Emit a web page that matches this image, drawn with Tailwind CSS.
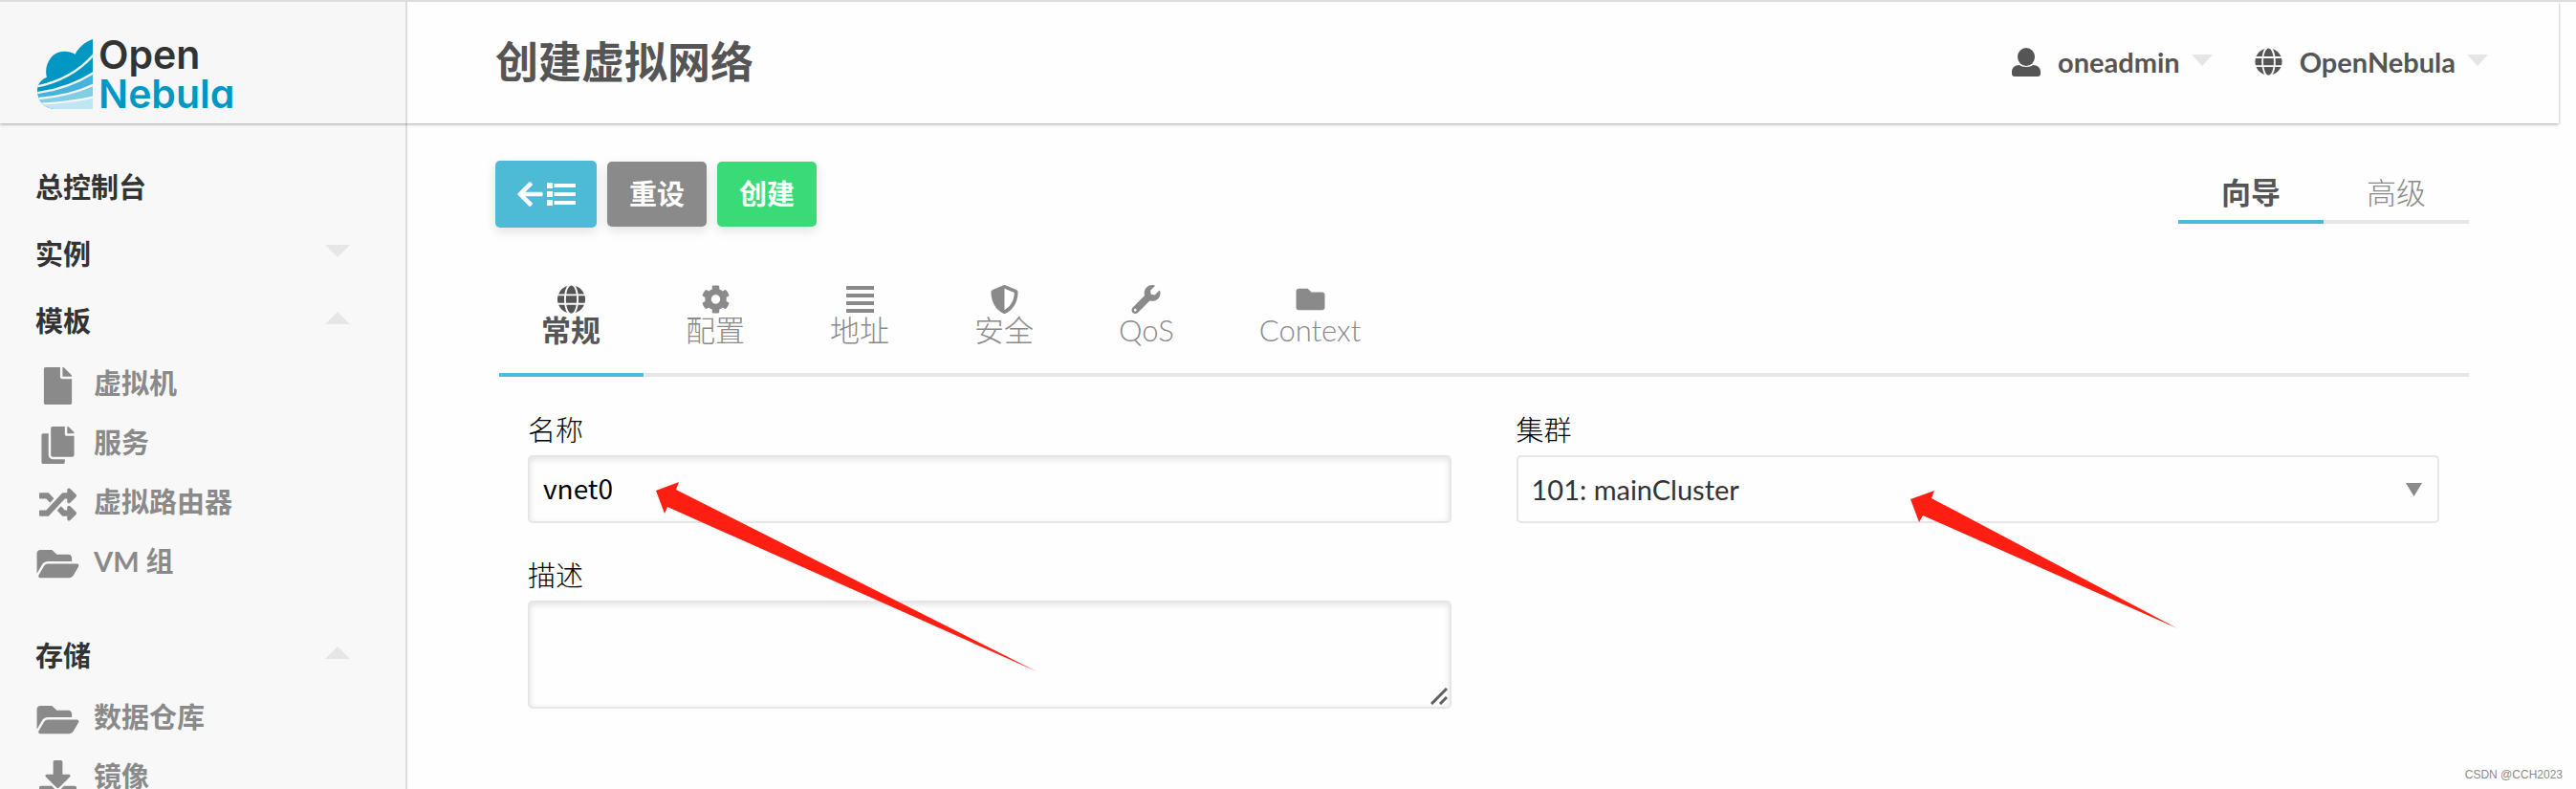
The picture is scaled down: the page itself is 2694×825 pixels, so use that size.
<!DOCTYPE html>
<html lang="zh-CN">

<head>
    <meta charset="UTF-8">
    <meta name="viewport" content="width=device-width, initial-scale=1.0">
    <title>OpenNebula - 创建虚拟网络</title>
    <script src="https://cdn.jsdelivr.net/npm/@tailwindcss/browser@4"></script>
</head>

<body class="relative flex h-screen flex-col overflow-hidden border-t-2 border-[#ddd] bg-[#fefefe] font-['Lato','Noto_Sans_CJK_SC',sans-serif] text-[29px] text-[#333]">
    <!-- Header -->
    <header class="relative z-10 mr-[18px] flex h-[127px] shrink-0 bg-[#fefefe] shadow-[0_1px_3px_rgba(0,0,0,0.35)]">
        <a href="#" class="flex w-[426px] shrink-0 items-center gap-[6px] border-r-2 border-[#ddd] bg-[#f7f7f7] pt-6 pl-[39px]">
            <svg class="h-[73px] w-[58px]" viewBox="0 0 174 219">
                <defs>
                    <clipPath id="cloud">
                        <path d="M174 0V219H58C24 219 0 194 0 160C0 142 12 126 30 119C20 82 44 38 83 38C97 38 109 41 119 47C128 28 148 8 174 0Z"/>
                    </clipPath>
                </defs>
                <g clip-path="url(#cloud)">
                    <path fill="#0098c3" d="M0 0H174V219H0Z"/>
                    <path fill="#45b3db" d="M-4 169C60 160 120 142 178 105V219H-4Z"/>
                    <path fill="#83cee6" d="M-4 187C60 182 120 170 178 143V219H-4Z"/>
                    <path fill="#c0e6f3" d="M-4 203C60 200 120 196 178 182V219H-4Z"/>
                    <g fill="none" stroke="#f7f7f7" stroke-width="7">
                        <path d="M-4 149C70 134 128 105 178 47"/>
                        <path d="M-4 169C60 160 120 142 178 104"/>
                        <path d="M-4 187C60 182 120 170 178 142"/>
                        <path d="M-4 204C60 201 120 196 178 181"/>
                    </g>
                </g>
            </svg>
            <span class="flex flex-col font-['Inter'] text-[41px] leading-[41px] font-semibold [font-feature-settings:'cv11']">
                <span>Open</span>
                <span class="text-[#0098c3]">Nebula</span>
            </span>
        </a>
        <div class="flex flex-1 items-center justify-between pr-[74px] pl-[92px]">
            <h1 class="text-[45px] leading-none font-bold text-[#555]">创建虚拟网络</h1>
            <div class="flex gap-11 pb-[2px] font-bold text-[#555]">
                <button type="button" class="flex items-center">
                    <svg class="mr-[18px] h-[30px] w-[30px]" viewBox="0 0 30 30" fill="currentColor"><ellipse cx="15" cy="9.500" rx="9" ry="9.500"/><path d="M8 18C10 20.500 20 20.500 22 18C27 18 30 21 30 25V27C30 29 29 30 27 30H3C1 30 0 29 0 27V25C0 21 3 18 8 18Z"/></svg>
                    oneadmin
                    <svg class="mb-1 ml-3 h-[12px] w-[22px]" viewBox="0 0 22 12" fill="#e6e6e6"><path d="M0 0H22L11 12Z"/></svg>
                </button>
                <button type="button" class="flex items-center">
                    <svg class="mr-[18px] h-[29px] w-[29px]" viewBox="0 0 496 512" fill="currentColor"><path d="M336.500 160C322 70.700 287.800 8 248 8s-74 62.700-88.500 152h177zM152 256c0 22.200 1.200 43.500 3.300 64h185.300c2.100-20.500 3.300-41.800 3.300-64s-1.200-43.500-3.300-64H155.300c-2.100 20.500-3.300 41.800-3.300 64zm324.700-96c-28.600-67.900-86.500-120.400-158-141.600 24.400 33.800 41.200 84.700 50 141.600h108zM177.200 18.400C105.800 39.600 47.800 92.100 19.300 160h108c8.700-56.900 25.500-107.800 49.900-141.600zM487.400 192H372.700c2.100 21 3.300 42.500 3.300 64s-1.200 43-3.300 64h114.600c5.500-20.500 8.600-41.800 8.600-64s-3.100-43.500-8.500-64zM120 256c0-21.500 1.200-43 3.300-64H8.600C3.200 212.500 0 233.800 0 256s3.200 43.500 8.600 64h114.600c-2-21-3.200-42.500-3.200-64zm39.500 96c14.500 89.300 48.700 152 88.500 152s74-62.700 88.500-152h-177zm159.300 141.600c71.400-21.200 129.400-73.700 158-141.600h-108c-8.800 56.900-25.600 107.800-50 141.600zM19.300 352c28.600 67.900 86.500 120.400 158 141.600-24.400-33.800-41.200-84.700-50-141.600h-108z"/></svg>
                    OpenNebula
                    <svg class="mb-1 ml-3 h-[12px] w-[22px]" viewBox="0 0 22 12" fill="#e6e6e6"><path d="M0 0H22L11 12Z"/></svg>
                </button>
            </div>
        </div>
    </header>

    <div class="flex min-h-0 flex-1">
        <!-- Sidebar -->
        <nav class="w-[426px] shrink-0 overflow-hidden border-r-2 border-[#ddd] bg-[#f8f8f8] pt-[34px] pr-[58px] pl-[37px] font-bold">
            <a href="#" class="mb-1 flex h-[66px] items-center">总控制台</a>
            <a href="#" class="mb-1 flex h-[66px] items-center justify-between">
                实例
                <svg class="mb-2 h-[13px] w-[26px]" viewBox="0 0 26 13" fill="#e6e6e6"><path d="M0 0H26L13 13Z"/></svg>
            </a>
            <a href="#" class="flex h-[66px] items-center justify-between">
                模板
                <svg class="mb-2 h-[13px] w-[26px]" viewBox="0 0 26 13" fill="#e6e6e6"><path d="M0 13H26L13 0Z"/></svg>
            </a>
            <ul class="mt-px mb-[35px] text-[#8a8a8a]">
                <li>
                    <a href="#" class="flex h-[62px] items-center gap-[14px]">
                        <svg class="mt-1 h-[39px] w-[47px]" viewBox="0 0 384 512" fill="currentColor"><path d="M224 136V0H24C10.700 0 0 10.700 0 24v464c0 13.300 10.700 24 24 24h336c13.300 0 24-10.700 24-24V160H248c-13.200 0-24-10.800-24-24zm160-14.100v6.100H256V0h6.100c6.400 0 12.500 2.500 17 7l97.900 98c4.500 4.500 7 10.600 7 16.900z"/></svg>
                        虚拟机
                    </a>
                </li>
                <li>
                    <a href="#" class="flex h-[62px] items-center gap-[14px]">
                        <svg class="mt-1 h-[39px] w-[47px]" viewBox="0 0 448 512" fill="currentColor"><path d="M320 448v40c0 13.255-10.745 24-24 24H24c-13.255 0-24-10.745-24-24V120c0-13.255 10.745-24 24-24h72v296c0 30.879 25.121 56 56 56h168zm0-344V0H152c-13.255 0-24 10.745-24 24v368c0 13.255 10.745 24 24 24h272c13.255 0 24-10.745 24-24V128H344c-13.200 0-24-10.800-24-24zm120.971-31.029L375.029 7.029A24 24 0 0 0 358.059 0H352v96h96v-6.059a24 24 0 0 0-7.029-16.970z"/></svg>
                        服务
                    </a>
                </li>
                <li>
                    <a href="#" class="flex h-[62px] items-center gap-[14px]">
                        <svg class="mt-1 h-[39px] w-[47px]" viewBox="0 0 512 512" fill="currentColor"><path d="M504.971 359.029c9.373 9.373 9.373 24.569 0 33.941l-80 79.984c-15.010 15.010-40.971 4.490-40.971-16.971V416h-58.785a12.004 12.004 0 0 1-8.773-3.812l-70.556-75.596 53.333-57.143L352 336h32v-39.981c0-21.438 25.943-31.998 40.971-16.971l80 79.981zM12 176h84l52.781 56.551 53.333-57.143-70.556-75.596A11.999 11.999 0 0 0 122.785 96H12c-6.627 0-12 5.373-12 12v56c0 6.627 5.373 12 12 12zm372 0v39.984c0 21.460 25.961 31.980 40.971 16.971l80-79.984c9.373-9.373 9.373-24.569 0-33.941l-80-79.981C409.943 24.021 384 34.582 384 56.019V96h-58.785a12.004 12.004 0 0 0-8.773 3.812L96 336H12c-6.627 0-12 5.373-12 12v56c0 6.627 5.373 12 12 12h110.785c3.326 0 6.503-1.381 8.773-3.812L352 176h32z"/></svg>
                        虚拟路由器
                    </a>
                </li>
                <li>
                    <a href="#" class="flex h-[62px] items-center gap-[14px]">
                        <svg class="mt-1 h-[39px] w-[47px]" viewBox="0 0 576 512" fill="currentColor"><path d="M572.694 292.093L500.270 416.248A63.997 63.997 0 0 1 444.989 448H45.025c-18.523 0-30.064-20.093-20.731-36.093l72.424-124.155A64 64 0 0 1 152 256h399.964c18.523 0 30.064 20.093 20.730 36.093zM152 224h328v-48c0-26.510-21.490-48-48-48H272l-64-64H48C21.490 64 0 85.490 0 112v278.046l69.077-118.418C86.214 242.250 117.989 224 152 224z"/></svg>
                        VM 组
                    </a>
                </li>
            </ul>
            <a href="#" class="flex h-[66px] items-center justify-between">
                存储
                <svg class="mb-2 h-[13px] w-[26px]" viewBox="0 0 26 13" fill="#e6e6e6"><path d="M0 13H26L13 0Z"/></svg>
            </a>
            <ul class="text-[#8a8a8a]">
                <li>
                    <a href="#" class="flex h-[62px] items-center gap-[14px]">
                        <svg class="mt-1 h-[39px] w-[47px]" viewBox="0 0 576 512" fill="currentColor"><path d="M572.694 292.093L500.270 416.248A63.997 63.997 0 0 1 444.989 448H45.025c-18.523 0-30.064-20.093-20.731-36.093l72.424-124.155A64 64 0 0 1 152 256h399.964c18.523 0 30.064 20.093 20.730 36.093zM152 224h328v-48c0-26.510-21.490-48-48-48H272l-64-64H48C21.490 64 0 85.490 0 112v278.046l69.077-118.418C86.214 242.250 117.989 224 152 224z"/></svg>
                        数据仓库
                    </a>
                </li>
                <li>
                    <a href="#" class="flex h-[62px] items-center gap-[14px]">
                        <svg class="mt-1 h-[39px] w-[47px]" viewBox="0 0 512 512" fill="currentColor"><path d="M216 0h80c13.300 0 24 10.700 24 24v168h87.700c17.800 0 26.700 21.500 14.100 34.100L269.700 378.300c-7.500 7.500-19.800 7.500-27.300 0L90.100 226.100c-12.600-12.600-3.700-34.100 14.100-34.100H192V24c0-13.300 10.700-24 24-24zm296 376v112c0 13.300-10.700 24-24 24H24c-13.300 0-24-10.700-24-24V376c0-13.300 10.700-24 24-24h146.700l49 49c20.100 20.100 52.500 20.100 72.600 0l49-49H488c13.300 0 24 10.700 24 24z"/></svg>
                        镜像
                    </a>
                </li>
            </ul>
        </nav>

        <!-- Content -->
        <main class="min-w-0 flex-1 pt-[39px] pr-[112px] pl-[92px]">
            <div class="flex items-start justify-between">
                <div class="flex items-center gap-[11px] font-bold text-white">
                    <button type="button" aria-label="返回列表" class="flex h-[70px] w-[106px] items-center justify-center gap-1 rounded-[5px] bg-[#4dbbd5] shadow-[0_4px_12px_rgba(0,0,0,0.12)]">
                        <svg class="h-[30px] w-[27px]" viewBox="0 0 448 512" fill="currentColor"><path d="M257.500 445.100l-22.200 22.200c-9.400 9.400-24.600 9.400-33.900 0L7 273c-9.400-9.400-9.400-24.600 0-33.900L201.400 44.700c9.400-9.400 24.600-9.400 33.900 0l22.200 22.200c9.500 9.500 9.300 25-.4 34.300L136.600 216H424c13.300 0 24 10.700 24 24v32c0 13.300-10.700 24-24 24H136.600l120.500 114.800c9.800 9.300 10 24.800.4 34.300z"/></svg>
                        <svg class="h-[24px] w-[30px]" viewBox="0 0 30 24" fill="currentColor"><path d="M0 0h6v6H0zM0 9h6v6H0zM0 18h6v6H0zM7.500 1H30v4H7.500zM7.500 10H30v4H7.500zM7.500 19H30v4H7.500z"/></svg>
                    </button>
                    <button type="button" class="h-[68px] w-[104px] rounded-[5px] bg-[#8a8a8a] shadow-[0_4px_12px_rgba(0,0,0,0.12)]">重设</button>
                    <button type="button" class="h-[68px] w-[104px] rounded-[5px] bg-[#3adb76] shadow-[0_4px_12px_rgba(0,0,0,0.12)]">创建</button>
                </div>
                <div class="flex text-[31px]">
                    <button type="button" class="h-[66px] border-b-4 border-[#4dbbd5] px-[45px] pt-1 font-bold text-[#555]">向导</button>
                    <button type="button" class="h-[66px] border-b-4 border-[#e6e6e6] px-[45px] pt-1 font-light text-[#8a8a8a]">高级</button>
                </div>
            </div>

            <div class="mt-[60px] ml-1 flex text-[31px] leading-[34px] font-light text-[#8a8a8a]">
                <button type="button" class="flex flex-col items-center border-b-4 border-[#4dbbd5] pr-[45px] pb-[28px] pl-[44px] font-bold text-[#555]">
                    <svg class="h-[30px] w-[31px]" viewBox="0 0 496 512" fill="currentColor"><path d="M336.500 160C322 70.700 287.800 8 248 8s-74 62.700-88.500 152h177zM152 256c0 22.200 1.200 43.500 3.300 64h185.300c2.100-20.500 3.300-41.800 3.300-64s-1.200-43.500-3.300-64H155.300c-2.100 20.500-3.300 41.800-3.300 64zm324.700-96c-28.600-67.900-86.500-120.400-158-141.600 24.400 33.800 41.200 84.700 50 141.600h108zM177.200 18.400C105.800 39.600 47.800 92.100 19.300 160h108c8.700-56.900 25.500-107.800 49.900-141.600zM487.400 192H372.700c2.100 21 3.300 42.500 3.300 64s-1.200 43-3.300 64h114.600c5.500-20.500 8.600-41.800 8.600-64s-3.100-43.500-8.500-64zM120 256c0-21.500 1.200-43 3.300-64H8.600C3.200 212.500 0 233.800 0 256s3.200 43.500 8.600 64h114.600c-2-21-3.200-42.500-3.200-64zm39.500 96c14.500 89.300 48.700 152 88.500 152s74-62.700 88.500-152h-177zm159.300 141.600c71.400-21.200 129.400-73.700 158-141.600h-108c-8.800 56.900-25.600 107.800-50 141.600zM19.300 352c28.600 67.900 86.500 120.400 158 141.600-24.400-33.800-41.200-84.700-50-141.600h-108z"/></svg>
                    常规
                </button>
                <button type="button" class="flex flex-col items-center border-b-4 border-[#e6e6e6] pr-[45px] pb-[28px] pl-[44px]">
                    <svg class="h-[30px] w-[31px]" viewBox="0 0 512 512" fill="currentColor"><path d="M487.400 315.700l-42.600-24.600c4.300-23.200 4.300-47 0-70.200l42.600-24.600c4.900-2.800 7.100-8.600 5.500-14-11.100-35.600-30-67.800-54.700-94.600-3.800-4.100-10-5.100-14.800-2.300L380.800 110c-17.900-15.400-38.500-27.300-60.800-35.100V25.800c0-5.600-3.900-10.500-9.400-11.700-36.700-8.200-74.300-7.800-109.200 0-5.500 1.200-9.400 6.100-9.400 11.700V75c-22.200 7.900-42.800 19.800-60.800 35.100L88.700 85.500c-4.900-2.800-11-1.900-14.800 2.300-24.700 26.700-43.600 58.900-54.700 94.600-1.700 5.400.6 11.200 5.500 14L67.300 221c-4.300 23.200-4.300 47 0 70.200l-42.600 24.600c-4.900 2.800-7.100 8.600-5.500 14 11.100 35.600 30 67.800 54.700 94.600 3.800 4.100 10 5.100 14.800 2.300l42.600-24.600c17.900 15.400 38.500 27.300 60.800 35.100v49.200c0 5.600 3.900 10.500 9.400 11.700 36.700 8.200 74.300 7.800 109.200 0 5.500-1.200 9.400-6.100 9.400-11.700v-49.200c22.200-7.900 42.800-19.800 60.800-35.100l42.600 24.600c4.900 2.800 11 1.900 14.800-2.300 24.700-26.700 43.600-58.900 54.700-94.600 1.500-5.500-.7-11.300-5.600-14.100zM256 336c-44.100 0-80-35.900-80-80s35.900-80 80-80 80 35.900 80 80-35.900 80-80 80z"/></svg>
                    配置
                </button>
                <button type="button" class="flex flex-col items-center border-b-4 border-[#e6e6e6] pr-[45px] pb-[28px] pl-[44px]">
                    <svg class="h-[30px] w-[31px]" viewBox="0 0 31 30" fill="currentColor"><path d="M1 1H30V5H1zM1 9H30V13H1zM1 17H30V21H1zM1 25H30V29H1z"/></svg>
                    地址
                </button>
                <button type="button" class="flex flex-col items-center border-b-4 border-[#e6e6e6] pr-[45px] pb-[28px] pl-[44px]">
                    <svg class="h-[30px] w-[31px]" viewBox="16 0 480 512" fill="currentColor"><path fill-rule="evenodd" d="M466.500 83.700l-192-80a48.150 48.150 0 0 0-36.900 0l-192 80C27.700 91.100 16 108.600 16 128c0 198.500 114.500 335.700 221.500 380.300 11.800 4.900 25.100 4.900 36.900 0C360.100 472.600 496 349.300 496 128c0-19.400-11.700-36.900-29.500-44.300zM256.100 446.300l-.1-381 175.900 73.300c-3.300 151.400-82.100 261.100-175.800 307.700z"/></svg>
                    安全
                </button>
                <button type="button" class="flex flex-col items-center border-b-4 border-[#e6e6e6] pr-[45px] pb-[28px] pl-[44px]">
                    <svg class="h-[30px] w-[31px]" viewBox="0 0 512 512" fill="currentColor"><path d="M507.730 109.100c-2.240-9.030-13.540-12.090-20.120-5.510l-74.360 74.360-67.880-11.310-11.310-67.880 74.360-74.360c6.620-6.620 3.430-17.900-5.660-20.160-47.380-11.740-99.550.91-136.580 37.930-39.640 39.640-50.550 97.100-34.050 147.200L18.740 402.760c-24.990 24.990-24.990 65.510 0 90.500 24.990 24.990 65.510 24.990 90.500 0l213.210-213.210c50.120 16.710 107.470 5.680 147.370-34.220 37.070-37.070 49.700-89.320 37.910-136.730zM64 472c-13.250 0-24-10.750-24-24 0-13.260 10.750-24 24-24s24 10.740 24 24c0 13.250-10.750 24-24 24z"/></svg>
                    QoS
                </button>
                <button type="button" class="flex flex-col items-center border-b-4 border-[#e6e6e6] pr-[45px] pb-[28px] pl-[44px]">
                    <svg class="h-[30px] w-[31px]" viewBox="0 0 512 512" fill="currentColor"><path d="M464 128H272l-64-64H48C21.490 64 0 85.490 0 112v288c0 26.510 21.490 48 48 48h416c26.510 0 48-21.490 48-48V176c0-26.510-21.490-48-48-48z"/></svg>
                    Context
                </button>
                <div class="flex-1 border-b-4 border-[#e6e6e6]"></div>
            </div>

            <form class="ml-1 grid grid-cols-2 gap-x-[68px] gap-y-[33px] pt-[34px] pr-[31px] pl-[30px]">
                <div>
                    <label for="name" class="mb-1 block leading-[44px] font-light text-black">名称</label>
                    <input type="text" id="name" name="name" value="vnet0" class="block h-[71px] w-full rounded-[5px] border-2 border-[#e6e6e6] px-[14px] pb-[3px] font-['Noto_Sans_CJK_SC',sans-serif] text-[28px] text-black shadow-[inset_0_2px_6px_rgba(0,0,0,0.12)]">
                </div>
                <div>
                    <label for="cluster" class="mb-1 block leading-[44px] font-light text-black">集群</label>
                    <div class="relative">
                        <select id="cluster" name="cluster" class="block h-[71px] w-full appearance-none rounded-[5px] border-2 border-[#e6e6e6] px-[14px]">
                            <option>101: mainCluster</option>
                        </select>
                        <svg class="pointer-events-none absolute top-[29px] right-[18px] h-[14px] w-[17px]" viewBox="0 0 17 14" fill="#8a8a8a"><path d="M0 0H17L8.500 14Z"/></svg>
                    </div>
                </div>
                <div>
                    <label for="description" class="mb-1 block leading-[44px] font-light text-black">描述</label>
                    <div class="relative">
                        <textarea id="description" name="description" class="block h-[113px] w-full resize-none rounded-[5px] border-2 border-[#e6e6e6] px-[14px] shadow-[inset_0_2px_6px_rgba(0,0,0,0.12)]"></textarea>
                        <svg class="pointer-events-none absolute right-1 bottom-1 h-[18px] w-[18px]" viewBox="0 0 18 18" fill="none" stroke="#5f5f5f" stroke-width="3"><path d="M1 17L17 1M10 17L17 10"/></svg>
                    </div>
                </div>
            </form>
        </main>
    </div>

    <!-- Pointers on the name and cluster fields -->
    <svg class="pointer-events-none absolute top-[502px] left-[686px] z-20 h-[198px] w-[399px]" viewBox="0 0 399 198" fill="#ff1e12"><path d="M0 9L24 0L21 8L398 198L12 26L9 33Z"/></svg>
    <svg class="pointer-events-none absolute top-[511px] left-[1998px] z-20 h-[144px] w-[280px]" viewBox="0 0 280 144" fill="#ff1e12"><path d="M0 9L25 0L22 8L279 144L13 26L9 33Z"/></svg>
    <p class="absolute right-[14px] bottom-[7px] font-['Liberation_Sans',sans-serif] text-[12px] leading-[16px] text-[#8a8a8a]">CSDN @CCH2023</p>
</body>

</html>
